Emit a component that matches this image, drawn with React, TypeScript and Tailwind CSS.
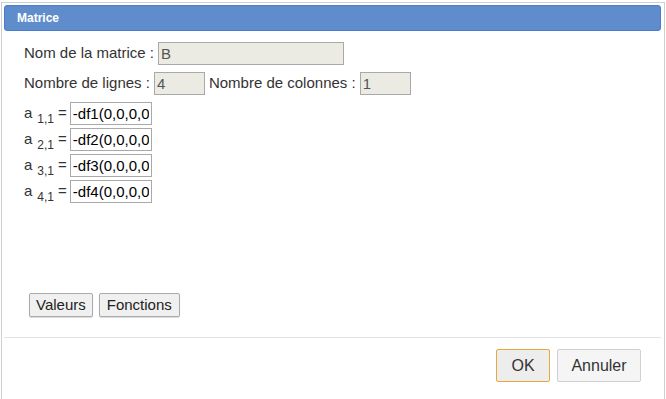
import React from "react";

const font = { fontFamily: '"Liberation Sans", Arial, sans-serif' };

function Field({ value, w, disabled }: { value: string; w: string; disabled?: boolean }) {
  return (
    <input
      readOnly
      value={value}
      className={`${w} h-[23px] border border-[#a9a9a9] px-[2px] text-[15px] outline-none ${
        disabled ? "bg-[#ebebe4] text-[#545454]" : "bg-white text-black"
      }`}
      style={font}
    />
  );
}

const cells = ["-df1(0,0,0,0", "-df2(0,0,0,0", "-df3(0,0,0,0", "-df4(0,0,0,0"];

export default function App() {
  return (
    <div className="w-[666px] h-[399px] bg-white overflow-hidden pt-[2px] pl-[1px]" style={font}>
      <div className="w-[664px] h-[420px] border border-[#cfcfcf] bg-white p-[2px] flex flex-col">
        <div className="h-[26px] w-[657px] rounded-[3px] bg-[#5f8dcc] border border-[#4a7bd0] flex items-center pl-[12px]">
          <span className="text-white font-bold text-[12px]">Matrice</span>
        </div>

        <div className="pl-[20px] text-[15px] text-[#333]">
          <div className="flex items-center mt-[11px] h-[23px]">
            <span className="mr-[4px]">Nom de la matrice :</span>
            <Field value="B" w="w-[186px]" disabled />
          </div>
          <div className="flex items-center mt-[7px] h-[23px]">
            <span className="mr-[4px]">Nombre de lignes :</span>
            <Field value="4" w="w-[51px]" disabled />
            <span className="ml-[4px] mr-[4px]">Nombre de colonnes :</span>
            <Field value="1" w="w-[51px]" disabled />
          </div>
          <div className="flex flex-col gap-[3px] mt-[7px]">
            {cells.map((c, i) => (
              <div key={c} className="flex items-center h-[23px]">
                <span>a</span>
                <span className="text-[12px] relative top-[5px] ml-[5px]">{i + 1},1</span>
                <span className="ml-[4px] mr-[3px]">=</span>
                <Field value={c} w="w-[82px]" />
              </div>
            ))}
          </div>
        </div>

        <div className="flex gap-[6px] pl-[25px] mt-[90px]">
          <button className="h-[24px] px-[6px] border border-[#aaa] bg-[#f0f0f0] text-[15px] text-[#222] rounded-[2px] shadow-[0_1px_1px_rgba(0,0,0,0.15)]">
            Valeurs
          </button>
          <button className="h-[24px] px-[7px] border border-[#aaa] bg-[#f0f0f0] text-[15px] text-[#222] rounded-[2px] shadow-[0_1px_1px_rgba(0,0,0,0.15)]">
            Fonctions
          </button>
        </div>

        <div className="mt-[20px] h-[1px] w-[657px] bg-[#e3e3e3]" />

        <div className="flex justify-end gap-[7px] pr-[21px] mt-[11px]">
          <button className="w-[54px] h-[33px] border border-[#e8a83c] bg-[#ededed] rounded-[2px] text-[16px] text-[#333]">
            OK
          </button>
          <button className="w-[84px] h-[33px] border border-[#d0d0d0] bg-[#f5f5f5] rounded-[2px] text-[16px] text-[#333]">
            Annuler
          </button>
        </div>
      </div>
    </div>
  );
}
